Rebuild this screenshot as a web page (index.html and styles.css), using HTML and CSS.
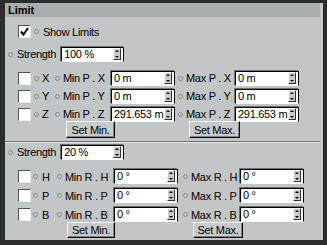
FILE: index.html
```html
<!DOCTYPE html>
<html lang="en">
<head>
  <meta charset="UTF-8">
  <title>Limit</title>
  <link rel="stylesheet" href="styles.css">
</head>
<body>

  <div class="panel">
    <div class="head">Limit</div>

    <div class="section top">
      <div class="show-row">
        <span class="check on"><svg width="9" height="9" viewBox="0 0 9 9"><path d="M1 4.5 L3.5 7.5 L8 1" fill="none" stroke="#000" stroke-width="2"/></svg></span>
        <span class="dot"></span><span>Show Limits</span>
      </div>

      <div class="strength">
        <span class="dot"></span><span class="lbl">Strength</span>
        <span class="field short">100 %<span class="spin"></span></span>
      </div>

      <div class="grid">
        <span class="check"></span>
        <span class="cell axis"><span class="dot"></span>X</span>
        <span class="cell min"><span class="dot"></span>Min P . X</span>
        <span class="field">0 m<span class="spin"></span></span>
        <span class="cell max"><span class="dot"></span>Max P . X</span>
        <span class="field">0 m<span class="spin"></span></span>

        <span class="check"></span>
        <span class="cell axis"><span class="dot"></span>Y</span>
        <span class="cell min"><span class="dot"></span>Min P . Y</span>
        <span class="field">0 m<span class="spin"></span></span>
        <span class="cell max"><span class="dot"></span>Max P . Y</span>
        <span class="field">0 m<span class="spin"></span></span>

        <span class="check"></span>
        <span class="cell axis"><span class="dot"></span>Z</span>
        <span class="cell min"><span class="dot"></span>Min P . Z</span>
        <span class="field">291.653 m<span class="spin"></span></span>
        <span class="cell max"><span class="dot"></span>Max P . Z</span>
        <span class="field">291.653 m<span class="spin"></span></span>
      </div>

      <div class="buttons">
        <button class="btn set-min">Set Min.</button>
        <button class="btn set-max">Set Max.</button>
      </div>
    </div>

    <div class="sep"></div>

    <div class="section bottom">
      <div class="strength">
        <span class="dot"></span><span class="lbl">Strength</span>
        <span class="field short">20 %<span class="spin"></span></span>
      </div>

      <div class="grid">
        <span class="check"></span>
        <span class="cell axis"><span class="dot"></span>H</span>
        <span class="cell min"><span class="dot"></span>Min R . H</span>
        <span class="field">0 °<span class="spin"></span></span>
        <span class="cell max"><span class="dot"></span>Max R . H</span>
        <span class="field">0 °<span class="spin"></span></span>

        <span class="check"></span>
        <span class="cell axis"><span class="dot"></span>P</span>
        <span class="cell min"><span class="dot"></span>Min R . P</span>
        <span class="field">0 °<span class="spin"></span></span>
        <span class="cell max"><span class="dot"></span>Max R . P</span>
        <span class="field">0 °<span class="spin"></span></span>

        <span class="check"></span>
        <span class="cell axis"><span class="dot"></span>B</span>
        <span class="cell min"><span class="dot"></span>Min R . B</span>
        <span class="field">0 °<span class="spin"></span></span>
        <span class="cell max"><span class="dot"></span>Max R . B</span>
        <span class="field">0 °<span class="spin"></span></span>
      </div>

      <div class="buttons">
        <button class="btn set-min">Set Min.</button>
        <button class="btn set-max">Set Max.</button>
      </div>
    </div>
  </div>

</body>
</html>
```

FILE: styles.css
```css
body {
  margin: 0;
  background: #2c2c2c;
  font-family: "Liberation Sans", Arial, sans-serif;
  font-size: 11px;
  letter-spacing: -0.3px;
  color: #000;
}

.panel {
  width: 318px;
  height: 237px;
  margin: 3px 0 0 5px;
  background: #c2c6c6;
  overflow: hidden;
}

.head {
  width: 312px;
  height: 14px;
  padding-left: 3px;
  background: #a9adad;
  font-weight: bold;
  line-height: 15px;
  letter-spacing: 0;
}

.show-row {
  display: flex;
  align-items: center;
  height: 13px;
  margin: 8px 0 0 13px;
}

.show-row .dot {
  margin: 0 4px 0 3px;
}

.check {
  width: 11px;
  height: 11px;
  background: #fff;
  border: 1px solid;
  border-color: #555 #eee #eee #555;
  display: flex;
  align-items: center;
  justify-content: center;
}

.dot {
  display: inline-block;
  width: 3px;
  height: 3px;
  border: 1px solid #8c9090;
  border-radius: 50%;
  flex: none;
}

.strength {
  display: flex;
  align-items: center;
  height: 16px;
  margin: 8px 0 0 3px;
}

.strength .lbl {
  margin: 0 5px 0 4px;
}

.field {
  position: relative;
  box-sizing: border-box;
  width: 64px;
  height: 15px;
  background: #fff;
  border: 1px solid;
  border-color: #000 #000 #fff #000;
  box-shadow: -1px -1px 0 #6c7070;
  padding-left: 2px;
  line-height: 13px;
  white-space: nowrap;
  overflow: hidden;
}

.field.short {
  width: 63px;
}

.spin {
  position: absolute;
  right: 2px;
  top: 0;
  width: 6px;
  height: 10px;
  background: #c8cccc;
  border: 1px solid;
  border-color: #fff #333 #333 #fff;
}

.spin::before,
.spin::after {
  content: "";
  position: absolute;
  left: 1px;
  border-left: 2px solid transparent;
  border-right: 2px solid transparent;
}

.spin::before {
  top: 1px;
  border-bottom: 2px solid #000;
}

.spin::after {
  bottom: 1px;
  border-top: 2px solid #000;
}

.grid {
  display: grid;
  align-items: center;
  margin-left: 13px;
}

.top .grid {
  margin-top: 7px;
  grid-template-columns: 13px 23px 57px 64px 60px 64px;
  grid-auto-rows: 18px;
}

.bottom .grid {
  margin-top: 7px;
  grid-template-columns: 13px 25px 58px 63px 63px 62px;
  grid-auto-rows: 19px;
}

.cell {
  display: flex;
  align-items: center;
  white-space: nowrap;
}

.cell .dot {
  margin-right: 3px;
}

.top .axis .dot { margin-left: 3px; }
.top .min .dot { margin-left: 1px; }
.top .max .dot { margin-left: 3px; }

.bottom .axis .dot { margin-left: 2px; margin-right: 4px; }
.bottom .min .dot { margin-left: 1px; }
.bottom .max .dot { margin-left: 6px; }

.buttons {
  position: relative;
  height: 18px;
  margin-top: -2px;
}

.btn {
  position: absolute;
  top: 0;
  height: 17px;
  padding: 0;
  font: inherit;
  letter-spacing: inherit;
  background: #c6caca;
  border: 1px solid;
  border-color: #fff #000 #000 #fff;
  box-shadow: inset -1px -1px 0 #808484;
}

.top .set-min { left: 61px; width: 49px; }
.top .set-max { left: 184px; width: 51px; }

.bottom .set-min { left: 62px; width: 48px; height: 16px; }
.bottom .set-max { left: 188px; width: 50px; height: 16px; }

.sep {
  height: 1px;
  margin-top: 2px;
  width: 315px;
  background: #6c7070;
  border-bottom: 1px solid #e4e8e8;
}

.bottom .strength {
  margin-top: 1px;
}
```
